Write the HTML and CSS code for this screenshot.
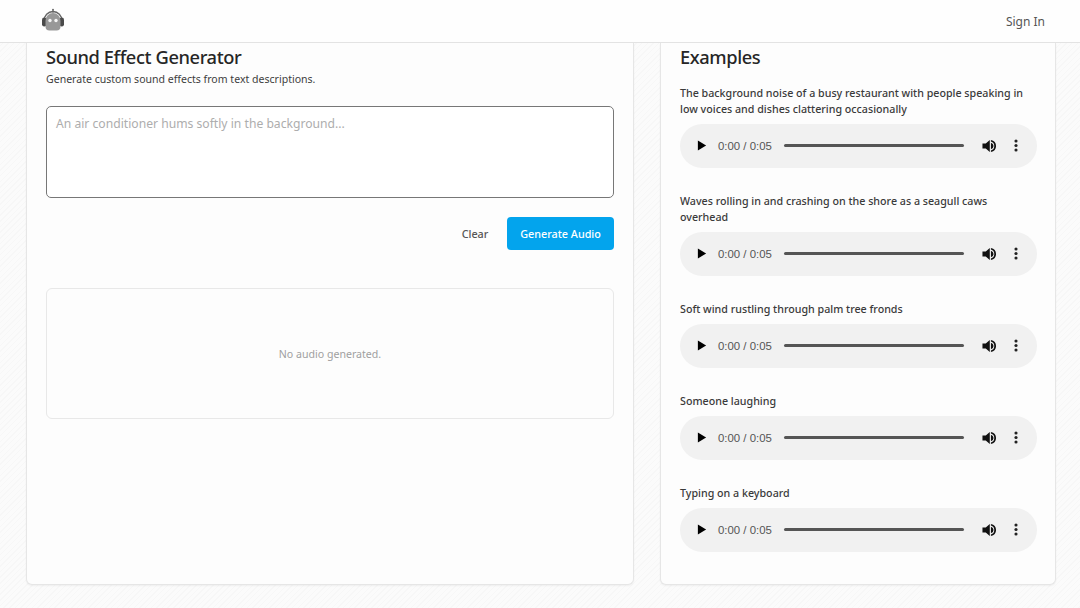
FILE: index.html
```html
<!DOCTYPE html>
<html lang="en">
<head>
<meta charset="utf-8">
<title>Sound Effect Generator</title>
<link rel="stylesheet" href="styles.css">
</head>
<body>
<svg class="defs" width="0" height="0" aria-hidden="true">
  <symbol id="play" viewBox="0 0 10 12"><path d="M.5 .5l9 5.500-9 5.500z"/></symbol>
  <symbol id="vol" viewBox="0 0 16 14"><path d="M.5 4.300h3.500L8.300 .5v13L4 9.700H.5z"/><path d="M9.500 3.500a3.600 3.600 0 0 1 0 7z"/><path d="M9.500 .5a6.600 6.600 0 0 1 0 13v-1.700a5 5 0 0 0 0-9.600z"/></symbol>
  <symbol id="more" viewBox="0 0 4 14"><circle cx="2" cy="2.200" r="1.700"/><circle cx="2" cy="7" r="1.700"/><circle cx="2" cy="11.800" r="1.700"/></symbol>
</svg>
<header class="topbar">
  <svg class="logo" viewBox="0 0 24 24" width="24" height="24" aria-label="logo">
    <circle cx="12" cy="1.800" r="1" fill="#6b6b6b"/>
    <rect x="11.500" y="2" width="1" height="3" fill="#6b6b6b"/>
    <path d="M3 13a9 9.500 0 0 1 18 0" fill="none" stroke="#666" stroke-width="1.400"/>
    <rect x="1" y="9.500" width="4.500" height="9" rx="2.200" fill="#4a4a4a"/>
    <rect x="18.500" y="9.500" width="4.500" height="9" rx="2.200" fill="#4a4a4a"/>
    <path d="M4.500 13a7.500 8 0 0 1 15 0v5.500q0 4-4 4h-7q-4 0-4-4z" fill="#989898"/>
    <circle cx="9" cy="12.500" r="1.700" fill="#f5f5f5"/>
    <circle cx="15" cy="12.500" r="1.700" fill="#f5f5f5"/>
  </svg>
  <a class="signin">Sign In</a>
</header>
<main class="layout">
  <section class="card card-left">
    <h1 class="title">Sound Effect Generator</h1>
    <p class="subtitle">Generate custom sound effects from text descriptions.</p>
    <textarea class="prompt" placeholder="An air conditioner hums softly in the background..."></textarea>
    <div class="actions">
      <button class="btn-clear">Clear</button>
      <button class="btn-generate">Generate Audio</button>
    </div>
    <div class="empty">No audio generated.</div>
  </section>
  <section class="card card-right">
    <h2 class="title">Examples</h2>
    <div class="example">
      <p class="label">The background noise of a busy restaurant with people speaking in low voices and dishes clattering occasionally</p>
      <div class="player"><svg class="i-play"><use href="#play"/></svg><span class="time">0:00 / 0:05</span><span class="track"></span><svg class="i-vol"><use href="#vol"/></svg><svg class="i-more"><use href="#more"/></svg></div>
    </div>
    <div class="example">
      <p class="label">Waves rolling in and crashing on the shore as a seagull caws overhead</p>
      <div class="player"><svg class="i-play"><use href="#play"/></svg><span class="time">0:00 / 0:05</span><span class="track"></span><svg class="i-vol"><use href="#vol"/></svg><svg class="i-more"><use href="#more"/></svg></div>
    </div>
    <div class="example">
      <p class="label">Soft wind rustling through palm tree fronds</p>
      <div class="player"><svg class="i-play"><use href="#play"/></svg><span class="time">0:00 / 0:05</span><span class="track"></span><svg class="i-vol"><use href="#vol"/></svg><svg class="i-more"><use href="#more"/></svg></div>
    </div>
    <div class="example">
      <p class="label">Someone laughing</p>
      <div class="player"><svg class="i-play"><use href="#play"/></svg><span class="time">0:00 / 0:05</span><span class="track"></span><svg class="i-vol"><use href="#vol"/></svg><svg class="i-more"><use href="#more"/></svg></div>
    </div>
    <div class="example">
      <p class="label">Typing on a keyboard</p>
      <div class="player"><svg class="i-play"><use href="#play"/></svg><span class="time">0:00 / 0:05</span><span class="track"></span><svg class="i-vol"><use href="#vol"/></svg><svg class="i-more"><use href="#more"/></svg></div>
    </div>
  </section>
</main>
</body>
</html>
```
FILE: styles.css
```css
* { box-sizing: border-box; }
html, body { margin: 0; height: 608px; overflow: hidden; }
body {
  font-family: "Noto Sans", "Open Sans", sans-serif;
  color: #2b2b2b;
  background-color: #f9f9f9;
  background-image: repeating-linear-gradient(135deg, #f7f7f7 0 1px, #fbfbfb 1px 4px);
}
.defs { display: block; height: 0; }
.topbar {
  height: 43px;
  background: #fefefe;
  border-bottom: 1px solid #e3e3e3;
  display: flex;
  align-items: center;
  justify-content: space-between;
  padding: 0 35px 0 41px;
}
.logo { display: block; margin-bottom: 2px; }
.signin { font-size: 12px; color: #555; }
.layout {
  display: flex;
  gap: 26px;
  padding: 0 24px 0 26px;
  height: 542px;
}
.card {
  background: #fdfdfd;
  border: 1px solid #e6e6e6;
  border-top: 0;
  border-radius: 0 0 6px 6px;
  box-shadow: 0 1px 2px rgba(0,0,0,.05);
}
.card-left { width: 608px; padding: 0 19px; }
.card-right { width: 396px; padding: 0 19px; }
.title {
  margin: 0;
  font-size: 18.300px;
  font-weight: 500;
  letter-spacing: -.4px;
  line-height: 28px;
  color: #262626;
}
.subtitle { margin: 0; font-size: 10.550px; line-height: 16px; color: #3d3d3d; }
.prompt {
  display: block;
  width: 568px;
  height: 92px;
  margin-top: 19px;
  padding: 9px 9px;
  border: 1px solid #777;
  border-radius: 5px;
  background: #fff;
  font: 12.150px/16px "Noto Sans", "Open Sans", sans-serif;
  resize: none;
  outline: none;
}
.prompt::placeholder { color: #adadad; }
.actions {
  display: flex;
  justify-content: flex-end;
  align-items: center;
  gap: 13px;
  margin-top: 19px;
}
.btn-clear, .btn-generate {
  border: 0;
  font: 500 10.800px/16px "Noto Sans", "Open Sans", sans-serif;
  height: 33px;
  border-radius: 4px;
}
.btn-clear { background: none; color: #555; width: 38px; padding: 0; }
.btn-generate { background: #03a4ed; color: #fff; width: 107px; padding: 0; }
.empty {
  margin-top: 38px;
  height: 131px;
  border: 1px solid #e8e8e8;
  border-radius: 6px;
  display: flex;
  align-items: center;
  justify-content: center;
  font-size: 10.600px;
  color: #a0a0a0;
}
.example { margin-top: 25px; }
.title + .example { margin-top: 14px; }
.label {
  margin: 0 0 7px;
  font-size: 10.700px;
  font-weight: 500;
  line-height: 16px;
  color: #3a3a3a;
}
.player {
  height: 44px;
  width: 357px;
  border-radius: 22px;
  background: #f1f1f1;
  display: flex;
  align-items: center;
  padding-left: 17px;
  padding-bottom: 1px;
}
.i-play { width: 10px; height: 11px; fill: #000; }
.time {
  margin-left: 11px;
  width: 66px;
  font-family: "Liberation Sans", Arial, sans-serif;
  font-size: 11.400px;
  color: #555;
  white-space: nowrap;
}
.track {
  width: 180px;
  height: 3.500px;
  border-radius: 2px;
  background: #555;
}
.i-vol { width: 15px; height: 14px; margin-left: 18px; fill: #111; }
.i-more { width: 4px; height: 13px; margin-left: 17px; fill: #222; }
```
